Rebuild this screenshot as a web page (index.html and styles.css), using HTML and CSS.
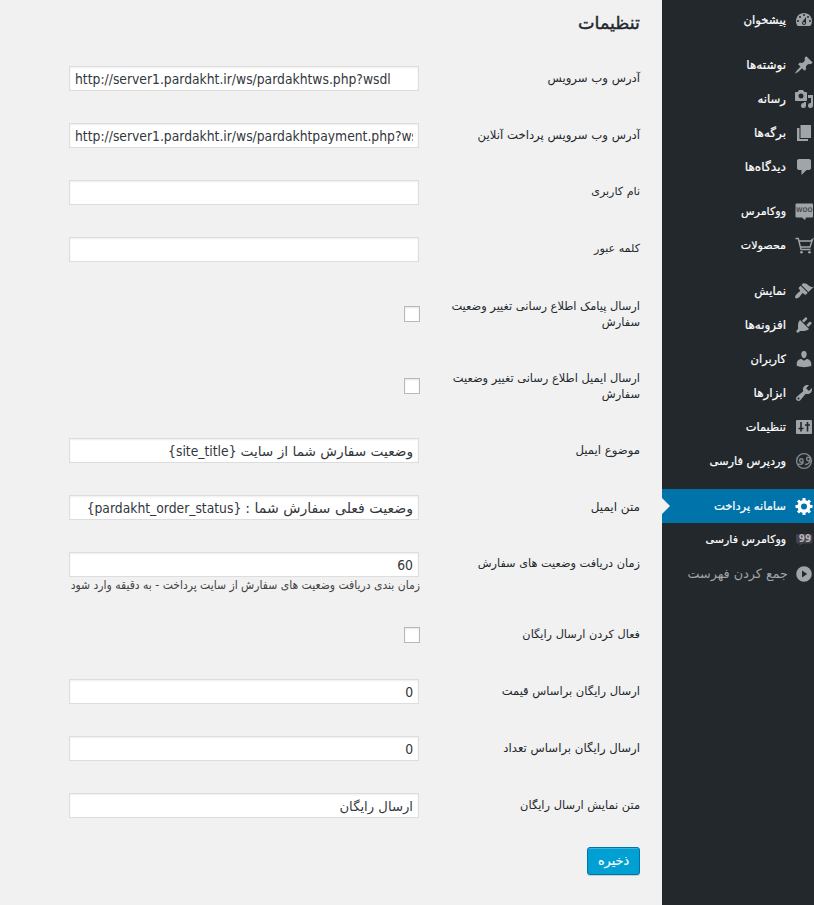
FILE: index.html
```html
<!DOCTYPE html>
<html lang="fa" dir="rtl">
<head>
<meta charset="utf-8">
<title>تنظیمات</title>
<link rel="stylesheet" href="styles.css">
</head>
<body>
<div class="page">
  <nav class="menu">
    <a class="item"><svg viewBox="0 1 20 20"><path fill-rule="evenodd" d="M3.76 17h12.48A7.96 7.96 0 0 0 18 12c0-4.42-3.58-8-8-8s-8 3.58-8 8c0 1.89.66 3.63 1.76 5zM10 5a1 1 0 1 1 0 2 1 1 0 0 1 0-2zM6 7a1 1 0 1 1 0 2 1 1 0 0 1 0-2zm8 0a1 1 0 1 1 0 2 1 1 0 0 1 0-2zM8.63 12.55 12 8v6c0 1.1-.9 2-2 2s-2-.9-2-2c0-.57.24-1.08.63-1.45zM4 11a1 1 0 1 1 0 2 1 1 0 0 1 0-2zm12 0a1 1 0 1 1 0 2 1 1 0 0 1 0-2zm-5 3a1 1 0 1 0-2 0 1 1 0 0 0 2 0z"/></svg><span class="fs117">پیشخوان</span></a>
    <div class="sep"></div>
    <a class="item"><svg viewBox="0 0 20 20"><path d="M10.44 3.02l1.82-1.82 6.36 6.35-1.83 1.82c-1.05-.68-2.48-.57-3.41.36l-.75.75c-.92.93-1.04 2.35-.35 3.41l-1.83 1.82-2.41-2.41-2.8 2.79c-.42.42-3.38 2.71-3.8 2.29s1.86-3.39 2.28-3.81l2.79-2.79L4.1 9.36l1.83-1.82c1.05.69 2.48.57 3.4-.36l.75-.75c.93-.92 1.05-2.35.36-3.41z"/></svg><span>نوشته‌ها</span></a>
    <a class="item"><svg viewBox="0 0 20 20"><path fill-rule="evenodd" d="M13 11V4c0-.55-.45-1-1-1h-1.67L9 1H5L3.67 3H2c-.55 0-1 .45-1 1v7c0 .55.45 1 1 1h10c.55 0 1-.45 1-1zM7 4.5a2.500 2.500 0 1 1 0 5 2.500 2.500 0 0 1 0-5zM14 6h5v10.500a2.500 2.500 0 1 1-2-2.450V9h-3V6zm-4 8.050V13h2v3.500a2.500 2.500 0 1 1-2-2.450z"/></svg><span class="fs117">رسانه</span></a>
    <a class="item"><svg viewBox="0 0 20 20"><path d="M6.500 15V2H17v13H6.500zm-1 1H14v2H3V5h2.500v11z"/></svg><span>برگه‌ها</span></a>
    <a class="item"><svg viewBox="0 0 20 20"><path d="M5 2h10c1.100 0 2 .9 2 2v7c0 1.100-.9 2-2 2h-2.500l-5 5v-5H5c-1.100 0-2-.9-2-2V4c0-1.100.9-2 2-2z"/></svg><span class="fs122">دیدگاه‌ها</span></a>
    <div class="sep"></div>
    <a class="item"><svg viewBox="0 0 20 20"><path d="M2.500 1.500h15.500q1 0 1 1v12q0 1-1 1h-6l-1 2.500-3-2.500H2.500q-1 0-1-1v-12q0-1 1-1z"/><text class="woo" x="10.200" y="10.300" text-anchor="middle">WOO</text></svg><span class="fs111">ووکامرس</span></a>
    <a class="item"><svg viewBox="0 0 20 20"><path class="line" d="M1.500 2.500h2.800l2.700 11h9.500M5 5h11.500l2-1.500-2.500 7.500H6.500"/><circle cx="7.500" cy="16.200" r="1.300"/><circle cx="15.500" cy="16.200" r="1.300"/></svg><span class="fs111">محصولات</span></a>
    <div class="sep"></div>
    <a class="item"><svg viewBox="0 0 20 20"><path d="M14.480 11.060L7.410 3.990l1.500-1.500c.5-.56 2.300-.47 3.510.32 1.210.8 1.430 1.280 2.910 2.100 1.180.64 2.450 1.260 4.450.85zm-.71.71L6.700 4.700 4.930 6.470c-.39.39-.39 1.020 0 1.410l1.060 1.060c.39.39.39 1.030 0 1.420-.6.6-1.430 1.110-2.210 1.690-.35.26-.7.53-1.010.84C1.430 14.230.4 16.080 1.400 17.070c.99 1 2.840-.03 4.180-1.360.31-.31.58-.66.85-1.020.57-.78 1.080-1.610 1.690-2.210.39-.39 1.020-.39 1.410 0l1.060 1.060c.39.39 1.020.39 1.410 0z"/></svg><span class="fs117">نمایش</span></a>
    <a class="item"><svg viewBox="0 0 20 20"><path d="M13.110 4.360L9.870 7.600 8 5.730l3.240-3.240c.35-.34 1.050-.2 1.560.32.52.51.66 1.210.31 1.550zm-8 1.770l.91-1.120 9.010 9.010-1.190.84c-.71.71-2.630 1.160-3.820 1.160H6.140L4.900 17.260c-.59.59-1.540.59-2.120 0-.59-.58-.59-1.530 0-2.120l1.240-1.240v-3.880c0-1.130.4-3.190 1.090-3.890zm7.260 3.970l3.240-3.240c.34-.35 1.040-.21 1.550.31.52.51.66 1.210.31 1.550l-3.240 3.250z"/></svg><span>افزونه‌ها</span></a>
    <a class="item"><svg viewBox="0 0 20 20"><path d="M10 9.250c-2.270 0-2.730-3.440-2.730-3.440C7 4.020 7.820 2 9.970 2c2.160 0 2.980 2.020 2.710 3.810 0 0-.41 3.440-2.680 3.440zm0 2.570L12.720 10c2.390 0 4.520 2.330 4.520 4.530v2.490s-3.650 1.130-7.240 1.130c-3.650 0-7.240-1.130-7.240-1.130v-2.490c0-2.250 1.940-4.480 4.470-4.480z"/></svg><span class="fs114">کاربران</span></a>
    <a class="item"><svg viewBox="0 0 20 20"><path fill-rule="evenodd" d="M16.680 9.770c-1.340 1.340-3.300 1.670-4.950.99l-5.410 6.520c-.99.99-2.590.99-3.580 0s-.99-2.590 0-3.570l6.520-5.420c-.68-1.650-.35-3.610.99-4.950 1.280-1.280 3.120-1.620 4.720-1.060l-2.890 2.890 2.820 2.820 2.860-2.870c.53 1.580.18 3.390-1.080 4.650zM3.810 16.210c.4.39 1.040.39 1.430 0 .4-.4.4-1.040 0-1.430-.39-.4-1.030-.4-1.430 0-.39.39-.39 1.030 0 1.430z"/></svg><span>ابزارها</span></a>
    <a class="item"><svg viewBox="0 0 20 20"><path d="M3 3h14q1 0 1 1v12q0 1-1 1H3q-1 0-1-1V4q0-1 1-1z"/><path class="cut" d="M7 5v9.500M4.500 11.500h5M13.500 5v9.500M11 8h5"/></svg><span class="fs114">تنظیمات</span></a>
    <a class="item dim"><svg viewBox="0 0 20 20"><circle class="ring" cx="10" cy="10" r="7.400"/><path class="line" d="M9 9.500a1.700 1.700 0 1 0-1.700 1.700H9zm0 0v2.500q-1.500 2-5 1M16 8a1.700 1.700 0 1 0-1.700 1.700H16zm0 0v2.500q-1.500 3-5 3"/></svg><span class="fs114">وردپرس فارسی</span></a>
    <div class="sep"></div>
    <a class="item active"><svg viewBox="0 0 20 20"><path fill-rule="evenodd" d="M18.500 12h-2.180c-.17.7-.44 1.350-.81 1.930l1.540 1.540-2.100 2.100-1.540-1.540c-.58.36-1.230.63-1.910.79V19h-3v-2.180c-.68-.16-1.330-.43-1.910-.79l-1.540 1.540-2.120-2.120 1.540-1.540c-.36-.58-.63-1.230-.79-1.910H1.500V9.030h2.170c.16-.7.44-1.350.8-1.940L2.930 5.550l2.100-2.100 1.540 1.540c.58-.37 1.240-.64 1.930-.81V2h3v2.180c.68.16 1.330.43 1.910.79l1.540-1.540 2.120 2.120-1.540 1.540c.36.59.64 1.240.8 1.940h2.170V12zM10 13.500a3 3 0 1 0 0-6 3 3 0 0 0 0 6z"/></svg><span class="fs115">سامانه پرداخت</span></a>
    <a class="item"><svg viewBox="0 0 20 20"><path class="bubble" d="M3 4h14q1.500 0 1.500 1.500v6q0 2-2 2H9l-4 2.500 1-2.500H3q-1-1-1-2v-6Q2 4 3 4z"/><text class="nines" x="11" y="12.200" text-anchor="middle">99</text></svg><span class="fs110">ووکامرس فارسی</span></a>
    <a class="item collapse"><svg viewBox="0 0 20 20"><path fill-rule="evenodd" d="M10 2.200a7.800 7.800 0 1 1 0 15.600 7.800 7.800 0 0 1 0-15.600zM8 6.400v7.200l5.200-3.600z"/></svg><span>جمع کردن فهرست</span></a>
  </nav>
  <main class="content">
    <h2>تنظیمات</h2>
    <form class="form">
      <div class="row"><label class="fs117">آدرس وب سرویس</label><div class="field" dir="ltr">http://server1.pardakht.ir/ws/pardakhtws.php?wsdl</div></div>
      <div class="row"><label class="fs117">آدرس وب سرویس پرداخت آنلاین</label><div class="field" dir="ltr"><div class="clip">http://server1.pardakht.ir/ws/pardakhtpayment.php?wsdl</div></div></div>
      <div class="row"><label class="fs111">نام کاربری</label><div class="field"></div></div>
      <div class="row"><label class="fs111">کلمه عبور</label><div class="field"></div></div>
      <div class="row tall"><label class="fs114">ارسال پیامک اطلاع رسانی تغییر وضعیت سفارش</label><i class="check"></i></div>
      <div class="row tall"><label class="fs114">ارسال ایمیل اطلاع رسانی تغییر وضعیت سفارش</label><i class="check"></i></div>
      <div class="row"><label class="fs117">موضوع ایمیل</label><div class="field"><span class="fa subject">وضعیت سفارش شما از سایت</span> <bdi dir="ltr">{site_title}</bdi></div></div>
      <div class="row"><label>متن ایمیل</label><div class="field"><span class="fa">وضعیت فعلی سفارش شما :</span> <bdi dir="ltr">{pardakht_order_status}</bdi></div></div>
      <div class="row noted"><label class="fs113">زمان دریافت وضعیت های سفارش</label><div><div class="field">60</div><p class="note">زمان بندی دریافت وضعیت های سفارش از سایت پرداخت - به دقیقه وارد شود</p></div></div>
      <div class="row short"><label class="fs113">فعال کردن ارسال رایگان</label><i class="check"></i></div>
      <div class="row"><label class="fs115">ارسال رایگان براساس قیمت</label><div class="field">0</div></div>
      <div class="row"><label class="fs117">ارسال رایگان براساس تعداد</label><div class="field">0</div></div>
      <div class="row"><label class="fs114">متن نمایش ارسال رایگان</label><div class="field"><span class="fa caption">ارسال رایگان</span></div></div>
      <button type="button" class="save">ذخیره</button>
    </form>
  </main>
</div>
</body>
</html>
```
FILE: styles.css
```css
* { box-sizing: border-box; }
body { margin: 0; background: #f1f1f1; color: #23282d; font: 12px/16px "DejaVu Sans", sans-serif; }
.page { display: flex; height: 905px; overflow: hidden; }

.menu { width: 152px; flex: none; padding-top: 3px; background: #23282d; }
.item { position: relative; display: flex; align-items: center; gap: 8px; height: 34px; color: #fff; white-space: nowrap; }
.item svg { width: 20px; height: 20px; flex: none; fill: #a0a5aa; }
.item span { -webkit-text-stroke: .2px currentColor; }
.sep { height: 11px; }
.line, .ring { fill: none; stroke: #a0a5aa; stroke-width: 1.4; }
.dim .line, .dim .ring { stroke: #82878c; }
.cut { fill: none; stroke: #23282d; stroke-width: 1.6; }
.woo { font: bold 6.5px "DejaVu Sans Condensed", sans-serif; fill: #4b5055; }
.bubble { fill: #43414c; }
.nines { font: bold 10px "DejaVu Sans Condensed", sans-serif; fill: #b4b4ba; }
.active { background: #0073aa; }
.active svg { fill: #fff; }
.active::after { content: ""; position: absolute; left: 0; top: 9px; border: 8px solid transparent; border-left-color: #f1f1f1; border-right-width: 0; }
.collapse { color: #a0a5aa; font-size: 12.75px; gap: 6px; }
.collapse span { -webkit-text-stroke: 0; }

.fs110 { font-size: 11px; }
.fs111 { font-size: 11.1px; }
.fs113 { font-size: 11.3px; }
.fs114 { font-size: 11.4px; }
.fs115 { font-size: 11.5px; }
.fs117 { font-size: 11.7px; }
.fs122 { font-size: 12.2px; }

.content { flex: 1; padding: 0 22px 0 0; }
h2 { margin: 0; height: 50px; padding-top: 10px; font-size: 17.6px; line-height: 26px; font-weight: 400; -webkit-text-stroke: .4px #23282d; }
.row { display: grid; grid-template-columns: 200px 352px; column-gap: 20px; align-items: start; height: 57px; padding-top: 16px; }
.row label { padding-top: 4px; }
.tall { height: 72px; }
.noted { height: 71px; }
.short { height: 56px; }
.field { width: 350px; height: 25px; margin-right: 1px; padding: 1px 5px 0; border: 1px solid #ddd; background: #fff; box-shadow: inset 0 1px 2px rgba(0, 0, 0, .07); color: #32373c; font: 13.75px/23px "DejaVu Sans Condensed", sans-serif; white-space: nowrap; }
.clip { overflow: hidden; }
.fa { font-family: "DejaVu Sans", sans-serif; font-size: 14.1px; }
.subject { font-size: 13.7px; }
.caption { font-size: 13.2px; }
.check { width: 16px; height: 16px; margin-top: 12px; border: 1px solid #b4b9be; background: #fff; box-shadow: inset 0 1px 2px rgba(0, 0, 0, .1); }
.short .check { margin-top: 4px; }
.note { margin: 0; font: 12px/16px "DejaVu Sans Condensed", sans-serif; color: #444; white-space: nowrap; }
.save { display: block; width: 53px; height: 28px; margin-top: 13px; padding: 0 0 1px; border: 1px solid #0073aa; border-radius: 3px; background: #00a0d2; box-shadow: inset 0 1px 0 rgba(120, 200, 230, .5), 0 1px 0 rgba(0, 0, 0, .15); color: #fff; font: 12.8px "DejaVu Sans", sans-serif; -webkit-text-stroke: .15px #fff; }
```
